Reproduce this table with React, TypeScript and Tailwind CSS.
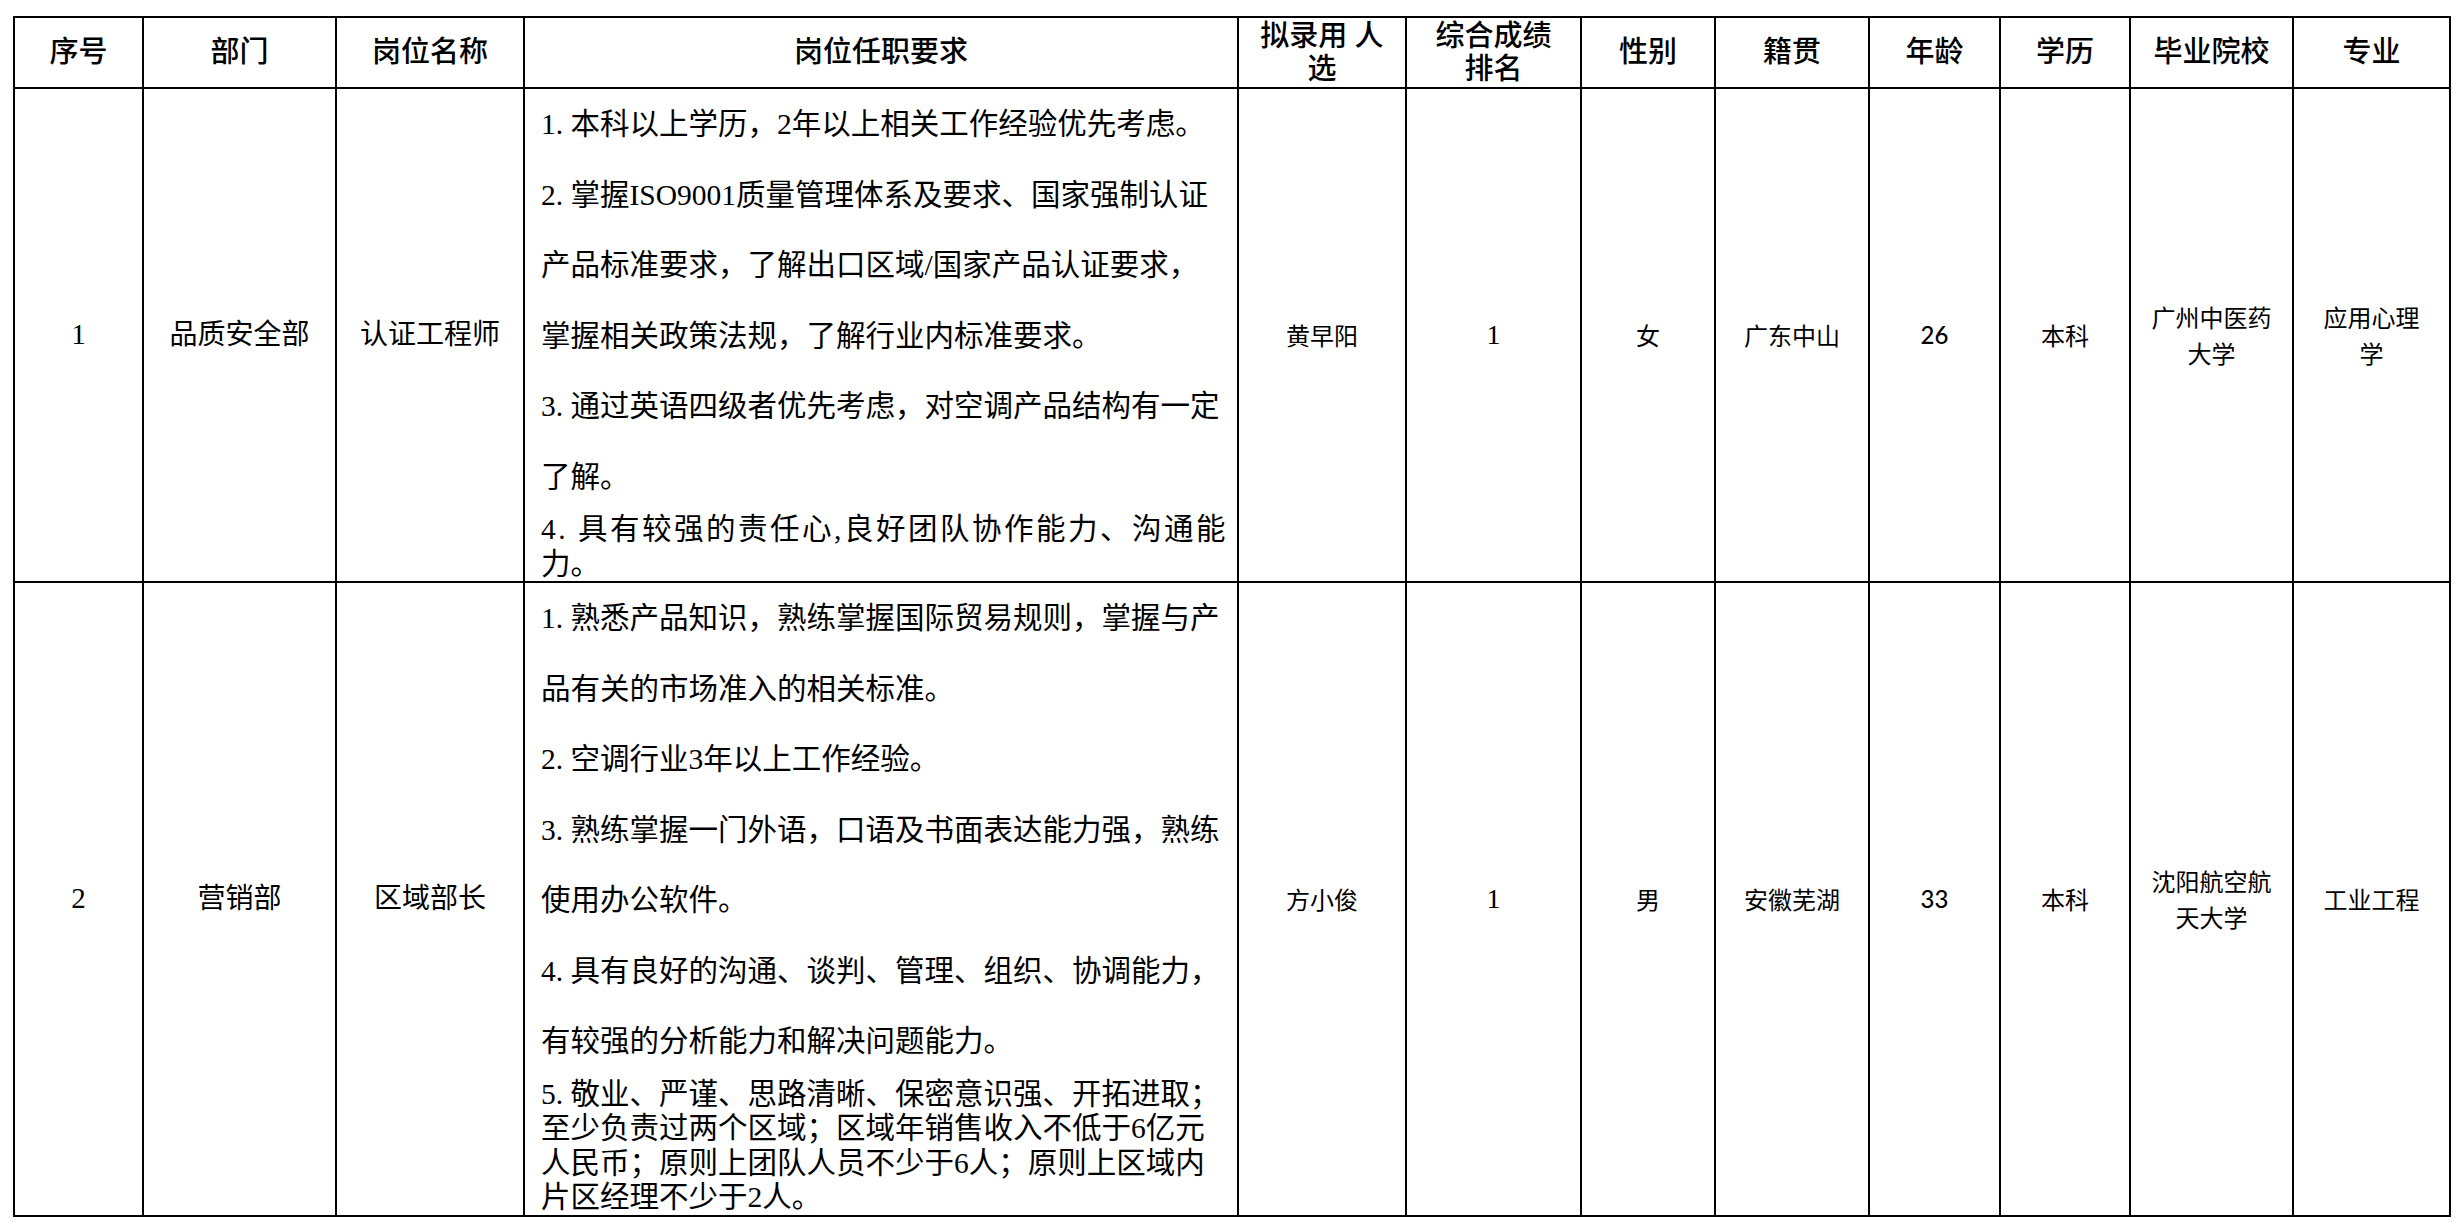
const colWidths = [
  'w-[129px]',
  'w-[193px]',
  'w-[188px]',
  'w-[714px]',
  'w-[168px]',
  'w-[175px]',
  'w-[134px]',
  'w-[154px]',
  'w-[131px]',
  'w-[130px]',
  'w-[163px]',
  'w-[157px]',
];

const headers: string[][] = [
  ['序号'],
  ['部门'],
  ['岗位名称'],
  ['岗位任职要求'],
  ['拟录用 人', '选'],
  ['综合成绩', '排名'],
  ['性别'],
  ['籍贯'],
  ['年龄'],
  ['学历'],
  ['毕业院校'],
  ['专业'],
];

interface Requirement {
  text: string;
  // 'wide' lines use double spacing, 'tight' lines are single spaced
  kind: 'wide' | 'tight';
  spaced?: boolean;
}

interface Candidate {
  no: string;
  dept: string;
  position: string;
  requirements: Requirement[];
  name: string;
  rank: string;
  gender: string;
  origin: string;
  age: string;
  education: string;
  school: string[];
  major: string[];
}

const rows: Candidate[] = [
  {
    no: '1',
    dept: '品质安全部',
    position: '认证工程师',
    requirements: [
      { text: '1. 本科以上学历，2年以上相关工作经验优先考虑。', kind: 'wide' },
      { text: '2. 掌握ISO9001质量管理体系及要求、国家强制认证', kind: 'wide' },
      { text: '产品标准要求，了解出口区域/国家产品认证要求，', kind: 'wide' },
      { text: '掌握相关政策法规，了解行业内标准要求。', kind: 'wide' },
      { text: '3. 通过英语四级者优先考虑，对空调产品结构有一定', kind: 'wide' },
      { text: '了解。', kind: 'wide' },
      { text: '4. 具有较强的责任心,良好团队协作能力、沟通能', kind: 'tight', spaced: true },
      { text: '力。', kind: 'tight' },
    ],
    name: '黄早阳',
    rank: '1',
    gender: '女',
    origin: '广东中山',
    age: '26',
    education: '本科',
    school: ['广州中医药', '大学'],
    major: ['应用心理', '学'],
  },
  {
    no: '2',
    dept: '营销部',
    position: '区域部长',
    requirements: [
      { text: '1. 熟悉产品知识，熟练掌握国际贸易规则，掌握与产', kind: 'wide' },
      { text: '品有关的市场准入的相关标准。', kind: 'wide' },
      { text: '2. 空调行业3年以上工作经验。', kind: 'wide' },
      { text: '3. 熟练掌握一门外语，口语及书面表达能力强，熟练', kind: 'wide' },
      { text: '使用办公软件。', kind: 'wide' },
      { text: '4. 具有良好的沟通、谈判、管理、组织、协调能力，', kind: 'wide' },
      { text: '有较强的分析能力和解决问题能力。', kind: 'wide' },
      { text: '5. 敬业、严谨、思路清晰、保密意识强、开拓进取；', kind: 'tight' },
      { text: '至少负责过两个区域；区域年销售收入不低于6亿元', kind: 'tight' },
      { text: '人民币；原则上团队人员不少于6人；原则上区域内', kind: 'tight' },
      { text: '片区经理不少于2人。', kind: 'tight' },
    ],
    name: '方小俊',
    rank: '1',
    gender: '男',
    origin: '安徽芜湖',
    age: '33',
    education: '本科',
    school: ['沈阳航空航', '天大学'],
    major: ['工业工程'],
  },
];

const cell = 'border-2 border-black align-middle text-center p-0';
const small = "text-[24px] leading-[36px] font-['Noto_Sans_CJK_SC',sans-serif]";

function Lines({ lines }: { lines: string[] }) {
  return (
    <>
      {lines.map((l) => (
        <div key={l} className="whitespace-nowrap">
          {l}
        </div>
      ))}
    </>
  );
}

export default function App() {
  return (
    <div className="bg-white min-h-[1230px] pt-[16px] pl-[13px] text-black font-['Liberation_Serif','Noto_Sans_CJK_SC',serif]">
      <table className="border-collapse table-fixed w-[2438px] border-2 border-black">
        <colgroup>
          {colWidths.map((w, i) => (
            <col key={i} className={w} />
          ))}
        </colgroup>
        <thead>
          <tr className="h-[71px]">
            {headers.map((h, i) => (
              <th key={i} className={`${cell} text-[29px] leading-[33px] font-medium`}>
                <Lines lines={h} />
              </th>
            ))}
          </tr>
        </thead>
        <tbody>
          {rows.map((r) => (
            <tr key={r.no}>
              <td className={`${cell} text-[29px]`}>{r.no}</td>
              <td className={`${cell} text-[28px]`}>{r.dept}</td>
              <td className={`${cell} text-[28px]`}>{r.position}</td>
              <td className={`${cell} text-left pl-[16px] text-[29.5px]`}>
                {r.requirements.map((q) => (
                  <div
                    key={q.text}
                    className={`whitespace-nowrap ${q.kind === 'wide' ? 'leading-[70.5px]' : 'leading-[34.5px]'} ${
                      q.spaced ? 'tracking-[2.5px]' : ''
                    }`}
                  >
                    {q.text}
                  </div>
                ))}
              </td>
              <td className={`${cell} ${small}`}>{r.name}</td>
              <td className={`${cell} text-[28px] font-['Liberation_Serif',serif]`}>{r.rank}</td>
              <td className={`${cell} ${small}`}>{r.gender}</td>
              <td className={`${cell} ${small}`}>{r.origin}</td>
              <td className={`${cell} text-[24px] font-medium font-['Lato',sans-serif]`}>{r.age}</td>
              <td className={`${cell} ${small}`}>{r.education}</td>
              <td className={`${cell} ${small}`}>
                <Lines lines={r.school} />
              </td>
              <td className={`${cell} ${small}`}>
                <Lines lines={r.major} />
              </td>
            </tr>
          ))}
        </tbody>
      </table>
    </div>
  );
}
